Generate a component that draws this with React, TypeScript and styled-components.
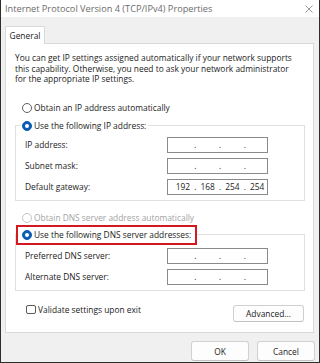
import React from "react";
import styled, { createGlobalStyle } from "styled-components";

const GlobalStyle = createGlobalStyle`
  html, body { margin: 0; padding: 0; background: #ffffff; }
  body { font-family: "Open Sans", "Noto Sans", sans-serif; }
  * { box-sizing: border-box; }
`;

const Window = styled.div`
  width: 320px;
  height: 363px;
  border: 1px solid #2e2e2e;
  border-top: none;
  background: #f0f0f0;
  display: flex;
  flex-direction: column;
  overflow: hidden;
  color: #1b1b1b;
  font-size: 8.4px;
`;

const TitleBar = styled.div`
  height: 17px;
  flex: none;
  background: #ffffff;
  display: flex;
  align-items: center;
  justify-content: space-between;
  padding: 0 6px 0 4px;
  font-size: 9.2px;
  color: #6b6b6b;
`;

const Body = styled.div`
  flex: 1;
  display: flex;
  flex-direction: column;
  padding: 9px 5px 0 4px;
`;

const TabStrip = styled.div`
  display: flex;
  height: 17px;
`;

const Tab = styled.div`
  width: 40px;
  height: 18px;
  background: #ffffff;
  border: 1px solid #dadada;
  border-bottom: none;
  display: flex;
  align-items: center;
  justify-content: center;
  position: relative;
  z-index: 1;
`;

const Panel = styled.div`
  height: 290px;
  background: #ffffff;
  border: 1px solid #dadada;
  padding: 9px 8px 0 9px;
  display: flex;
  flex-direction: column;
`;

const Intro = styled.p`
  margin: 0;
  line-height: 10.5px;
  white-space: nowrap;
`;

const OptionRow = styled.div<{ $top: number; $disabled?: boolean }>`
  display: flex;
  align-items: center;
  height: 14px;
  margin-top: ${(p) => p.$top}px;
  padding-left: 7px;
  color: ${(p) => (p.$disabled ? "#a3a3a3" : "#1b1b1b")};
`;

const Radio = styled.span<{ $checked?: boolean; $disabled?: boolean }>`
  width: 10px;
  height: 10px;
  border-radius: 50%;
  flex: none;
  margin-right: 2px;
  background: ${(p) => (p.$checked ? "#0a5cb5" : "#ffffff")};
  border: 1px solid
    ${(p) => (p.$checked ? "#0a5cb5" : p.$disabled ? "#c4c4c4" : "#5f5f5f")};
  display: flex;
  align-items: center;
  justify-content: center;
  &::after {
    content: "";
    width: 4px;
    height: 4px;
    border-radius: 50%;
    background: #ffffff;
    display: ${(p) => (p.$checked ? "block" : "none")};
  }
`;

const Group = styled.fieldset<{ $top: number; $bottom: number }>`
  margin: ${(p) => p.$top}px 0 0 0;
  padding: 0 0 ${(p) => p.$bottom}px 0;
  border: 1px solid #e0e0e0;
  min-width: 0;
  display: flex;
  flex-direction: column;
  gap: 5px;
`;

const Legend = styled.legend<{ $highlight?: boolean }>`
  display: flex;
  align-items: center;
  margin-left: ${(p) => (p.$highlight ? 0 : 5)}px;
  padding: ${(p) => (p.$highlight ? "0 4px 0 4px" : "0 2px 0 1px")};
  height: ${(p) => (p.$highlight ? 20 : 14)}px;
  border: ${(p) => (p.$highlight ? "2px solid #d3181f" : "none")};
  margin-bottom: ${(p) => (p.$highlight ? 3 : 4)}px;
  color: #1b1b1b;
`;

const FieldRow = styled.div`
  display: flex;
  align-items: center;
  height: 16px;
  padding: 0 36px 0 9px;
`;

const FieldLabel = styled.span`
  flex: 1;
`;

const IpBox = styled.div`
  width: 101px;
  height: 16px;
  border: 1px solid #8a8a8a;
  background: #ffffff;
  display: flex;
  align-items: center;
  padding-left: 5px;
`;

const Octet = styled.span`
  width: 20px;
  text-align: center;
`;

const Dot = styled.span`
  width: 5px;
  text-align: center;
`;

const FooterRow = styled.div`
  display: flex;
  align-items: flex-start;
  justify-content: space-between;
  margin-top: 14px;
  padding: 0 1px 0 11px;
`;

const CheckLabel = styled.label`
  display: flex;
  align-items: center;
  height: 10px;
`;

const CheckBox = styled.span`
  width: 10px;
  height: 9px;
  border: 1px solid #5a5a5a;
  border-radius: 2px;
  background: #ffffff;
  margin-right: 2px;
`;

const Button = styled.button<{ $w: number; $h: number }>`
  width: ${(p) => p.$w}px;
  height: ${(p) => p.$h}px;
  background: #fdfdfd;
  border: 1px solid #d0d0d0;
  border-bottom-color: #c2c2c2;
  border-radius: 3px;
  font-family: inherit;
  font-size: 8.4px;
  color: #1b1b1b;
  padding: 0;
`;

const ButtonBar = styled.div`
  display: flex;
  justify-content: flex-end;
  gap: 8px;
  margin-top: 8px;
  margin-right: -1px;
`;

const Ip = ({ parts }: { parts?: string[] }) => {
  const p = parts ?? ["", "", "", ""];
  return (
    <IpBox>
      {p.map((v, i) => (
        <React.Fragment key={i}>
          {i > 0 && <Dot>.</Dot>}
          <Octet>{v}</Octet>
        </React.Fragment>
      ))}
    </IpBox>
  );
};

export default function App() {
  return (
    <>
      <GlobalStyle />
      <Window>
        <TitleBar>
          <span>Internet Protocol Version 4 (TCP/IPv4) Properties</span>
          <svg width="8" height="8" viewBox="0 0 8 8">
            <path d="M0.5 0.5L7.5 7.5M7.5 0.5L0.5 7.5" stroke="#8a8a8a" strokeWidth="0.9" />
          </svg>
        </TitleBar>
        <Body>
          <TabStrip>
            <Tab>General</Tab>
          </TabStrip>
          <Panel>
            <Intro>
              You can get IP settings assigned automatically if your network supports
              <br />
              this capability. Otherwise, you need to ask your network administrator
              <br />
              for the appropriate IP settings.
            </Intro>
            <OptionRow $top={16}>
              <Radio />
              Obtain an IP address automatically
            </OptionRow>
            <Group $top={4} $bottom={5}>
              <Legend>
                <Radio $checked />
                Use the following IP address:
              </Legend>
              <FieldRow>
                <FieldLabel>IP address:</FieldLabel>
                <Ip />
              </FieldRow>
              <FieldRow>
                <FieldLabel>Subnet mask:</FieldLabel>
                <Ip />
              </FieldRow>
              <FieldRow>
                <FieldLabel>Default gateway:</FieldLabel>
                <Ip parts={["192", "168", "254", "254"]} />
              </FieldRow>
            </Group>
            <OptionRow $top={10} $disabled>
              <Radio $disabled />
              Obtain DNS server address automatically
            </OptionRow>
            <Group $top={0} $bottom={5}>
              <Legend $highlight>
                <Radio $checked />
                Use the following DNS server addresses:
              </Legend>
              <FieldRow>
                <FieldLabel>Preferred DNS server:</FieldLabel>
                <Ip />
              </FieldRow>
              <FieldRow>
                <FieldLabel>Alternate DNS server:</FieldLabel>
                <Ip />
              </FieldRow>
            </Group>
            <FooterRow>
              <CheckLabel>
                <CheckBox />
                Validate settings upon exit
              </CheckLabel>
              <Button $w={71} $h={17}>Advanced...</Button>
            </FooterRow>
          </Panel>
          <ButtonBar>
            <Button $w={58} $h={20}>OK</Button>
            <Button $w={58} $h={20}>Cancel</Button>
          </ButtonBar>
        </Body>
      </Window>
    </>
  );
}
